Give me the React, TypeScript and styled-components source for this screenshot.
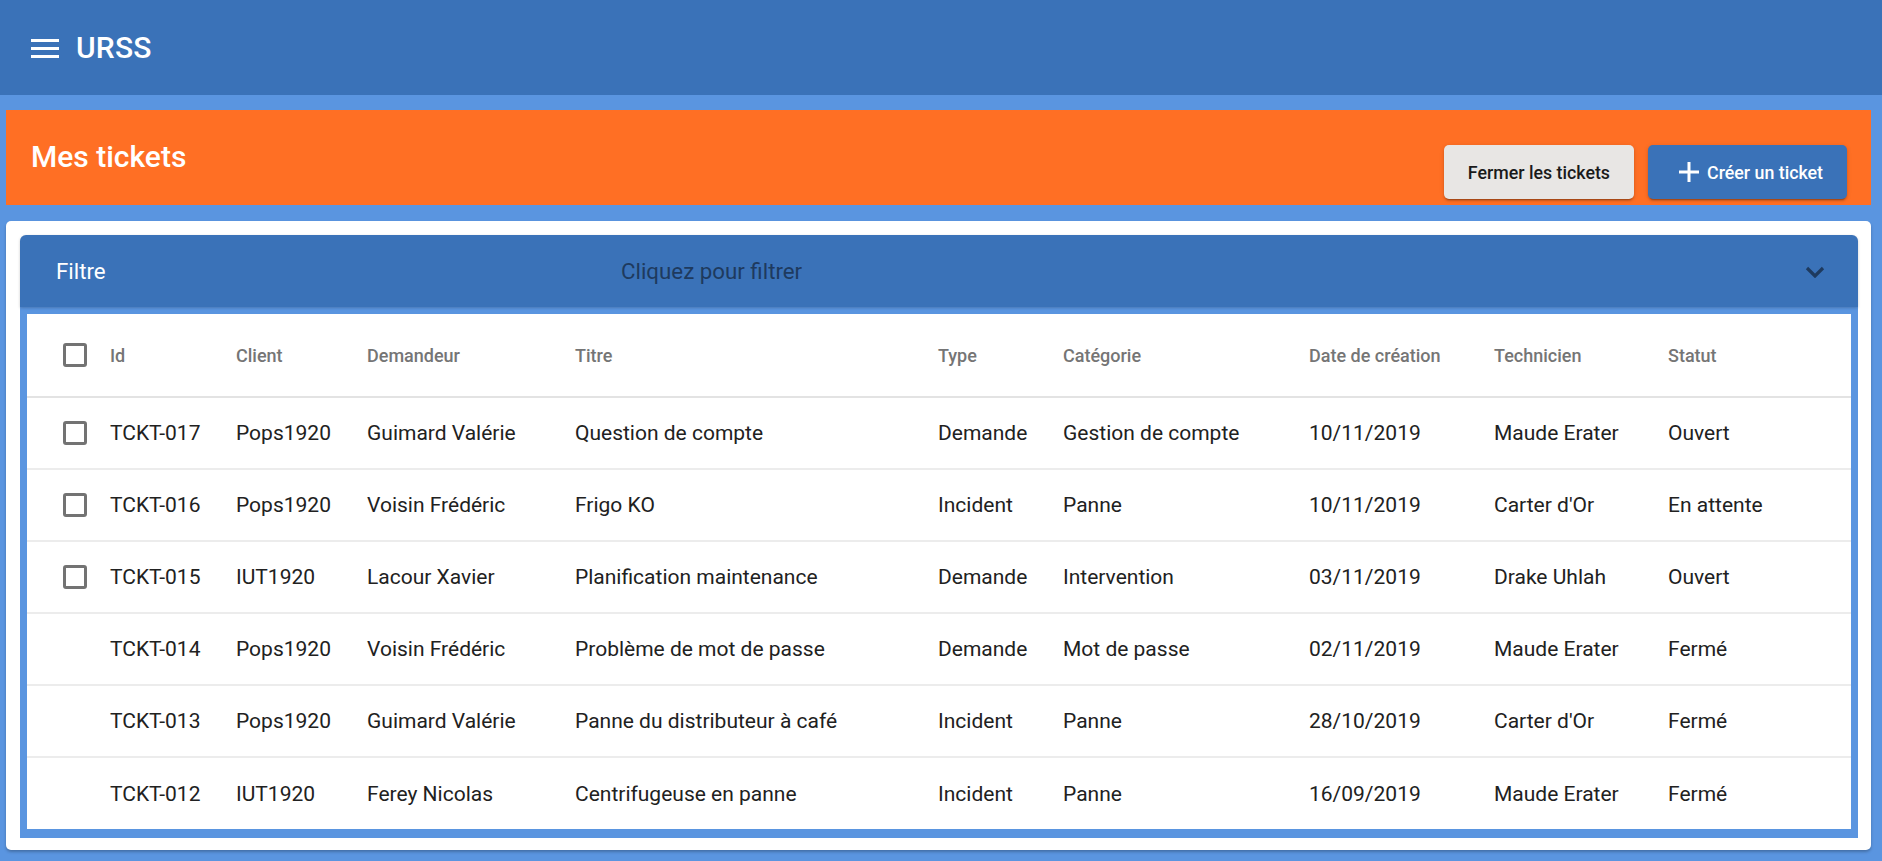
import React from "react";
import styled, { createGlobalStyle } from "styled-components";

const Global = createGlobalStyle`
  html, body { margin: 0; padding: 0; }
  body {
    background: #5a95e0;
    font-family: Roboto, "Noto Sans", Arial, sans-serif;
    min-height: 861px;
  }
  * { box-sizing: border-box; }
`;

const AppBar = styled.header`
  height: 95px;
  background: #3a72b8;
  display: flex;
  align-items: center;
  padding-left: 31px;
  gap: 17px;
`;

const Burger = styled.div`
  width: 28px;
  display: flex;
  flex-direction: column;
  gap: 5px;
  margin-top: 1px;
  span {
    display: block;
    height: 3px;
    background: #fff;
  }
`;

const Brand = styled.div`
  color: #fff;
  font-size: 30px;
  font-weight: 500;
  letter-spacing: 0.2px;
`;

const Main = styled.main`
  padding: 15px 11px 12px 6px;
  display: flex;
  flex-direction: column;
  gap: 16px;
`;

const Banner = styled.section`
  height: 95px;
  background: #ff6f24;
  display: flex;
  justify-content: space-between;
  padding: 4px 24px 6px 25px;
`;

const Title = styled.h1`
  margin: 0;
  align-self: center;
  color: #fff;
  font-size: 30px;
  font-weight: 500;
`;

const Actions = styled.div`
  align-self: flex-end;
  display: flex;
  gap: 14px;
`;

const Button = styled.button<{ $primary?: boolean }>`
  height: 54px;
  border: none;
  border-radius: 5px;
  font-family: inherit;
  font-size: 17.8px;
  font-weight: 500;
  display: flex;
  align-items: center;
  gap: 7px;
  padding: ${(p) => (p.$primary ? "0 24px 0 30px" : "0 24px")};
  background: ${(p) => (p.$primary ? "#3a72b8" : "#e8e6e4")};
  color: ${(p) => (p.$primary ? "#fff" : "#1a1a1a")};
  box-shadow: 0 3px 1px -2px rgba(0, 0, 0, 0.2), 0 2px 2px 0 rgba(0, 0, 0, 0.14),
    0 1px 5px 0 rgba(0, 0, 0, 0.12);
`;

const Card = styled.section`
  background: #fff;
  border-radius: 5px;
  padding: 14px 13px 12px 14px;
  box-shadow: 0 2px 3px rgba(0, 0, 0, 0.25);
`;

const FilterBar = styled.div`
  height: 72px;
  background: #3a72b8;
  border-radius: 6px 6px 0 0;
  display: flex;
  align-items: center;
  padding: 0 33px 0 36px;
  box-shadow: 0 1px 3px rgba(0, 0, 0, 0.2);
  position: relative;
  z-index: 1;
`;

const FilterLabel = styled.div`
  width: 565px;
  color: #fff;
  font-size: 22.3px;
`;

const FilterHint = styled.div`
  flex: 1;
  color: #1e3a5e;
  font-size: 22.3px;
`;

const TableFrame = styled.div`
  background: #5a95e0;
  padding: 7px 7px 9px 7px;
`;

const Table = styled.table`
  width: 100%;
  border-collapse: collapse;
  table-layout: fixed;
  background: #fff;
`;

const HeadCell = styled.th`
  height: 83px;
  text-align: left;
  font-weight: 500;
  font-size: 18px;
  color: #757575;
  padding: 0;
  border-bottom: 2px solid #e3e3e3;
`;

const Row = styled.tr`
  & + & td {
    border-top: 2px solid #ececec;
  }
`;

const Cell = styled.td`
  height: 72px;
  padding: 0;
  font-size: 21px;
  color: #212121;
  white-space: nowrap;
`;

const BoxCell = styled.div`
  display: flex;
  padding-left: 36px;
`;

const Check = styled.span`
  width: 24px;
  height: 24px;
  border: 3px solid #737373;
  border-radius: 3px;
  display: block;
`;

const cols = [83, 126, 131, 208, 363, 125, 246, 185, 174, 183];
const headers = [
  "Id",
  "Client",
  "Demandeur",
  "Titre",
  "Type",
  "Catégorie",
  "Date de création",
  "Technicien",
  "Statut",
];

type Ticket = string[];
const rows: { open: boolean; data: Ticket }[] = [
  { open: true, data: ["TCKT-017", "Pops1920", "Guimard Valérie", "Question de compte", "Demande", "Gestion de compte", "10/11/2019", "Maude Erater", "Ouvert"] },
  { open: true, data: ["TCKT-016", "Pops1920", "Voisin Frédéric", "Frigo KO", "Incident", "Panne", "10/11/2019", "Carter d'Or", "En attente"] },
  { open: true, data: ["TCKT-015", "IUT1920", "Lacour Xavier", "Planification maintenance", "Demande", "Intervention", "03/11/2019", "Drake Uhlah", "Ouvert"] },
  { open: false, data: ["TCKT-014", "Pops1920", "Voisin Frédéric", "Problème de mot de passe", "Demande", "Mot de passe", "02/11/2019", "Maude Erater", "Fermé"] },
  { open: false, data: ["TCKT-013", "Pops1920", "Guimard Valérie", "Panne du distributeur à café", "Incident", "Panne", "28/10/2019", "Carter d'Or", "Fermé"] },
  { open: false, data: ["TCKT-012", "IUT1920", "Ferey Nicolas", "Centrifugeuse en panne", "Incident", "Panne", "16/09/2019", "Maude Erater", "Fermé"] },
];

export default function App() {
  return (
    <>
      <Global />
      <AppBar>
        <Burger>
          <span />
          <span />
          <span />
        </Burger>
        <Brand>URSS</Brand>
      </AppBar>
      <Main>
        <Banner>
          <Title>Mes tickets</Title>
          <Actions>
            <Button>Fermer les tickets</Button>
            <Button $primary>
              <svg width="22" height="22" viewBox="0 0 22 22">
                <path d="M11 1v20M1 11h20" stroke="#fff" strokeWidth="3" />
              </svg>
              Créer un ticket
            </Button>
          </Actions>
        </Banner>
        <Card>
          <FilterBar>
            <FilterLabel>Filtre</FilterLabel>
            <FilterHint>Cliquez pour filtrer</FilterHint>
            <svg width="20" height="13" viewBox="0 0 20 13">
              <path d="M2 3l8 8 8-8" stroke="#1e3a5e" strokeWidth="3.2" fill="none" />
            </svg>
          </FilterBar>
          <TableFrame>
            <Table>
              <colgroup>
                {cols.map((w, i) => (
                  <col key={i} style={{ width: w }} />
                ))}
              </colgroup>
              <thead>
                <tr>
                  <HeadCell>
                    <BoxCell>
                      <Check />
                    </BoxCell>
                  </HeadCell>
                  {headers.map((h) => (
                    <HeadCell key={h}>{h}</HeadCell>
                  ))}
                </tr>
              </thead>
              <tbody>
                {rows.map((r) => (
                  <Row key={r.data[0]}>
                    <Cell>
                      {r.open && (
                        <BoxCell>
                          <Check />
                        </BoxCell>
                      )}
                    </Cell>
                    {r.data.map((d, i) => (
                      <Cell key={i}>{d}</Cell>
                    ))}
                  </Row>
                ))}
              </tbody>
            </Table>
          </TableFrame>
        </Card>
      </Main>
    </>
  );
}
